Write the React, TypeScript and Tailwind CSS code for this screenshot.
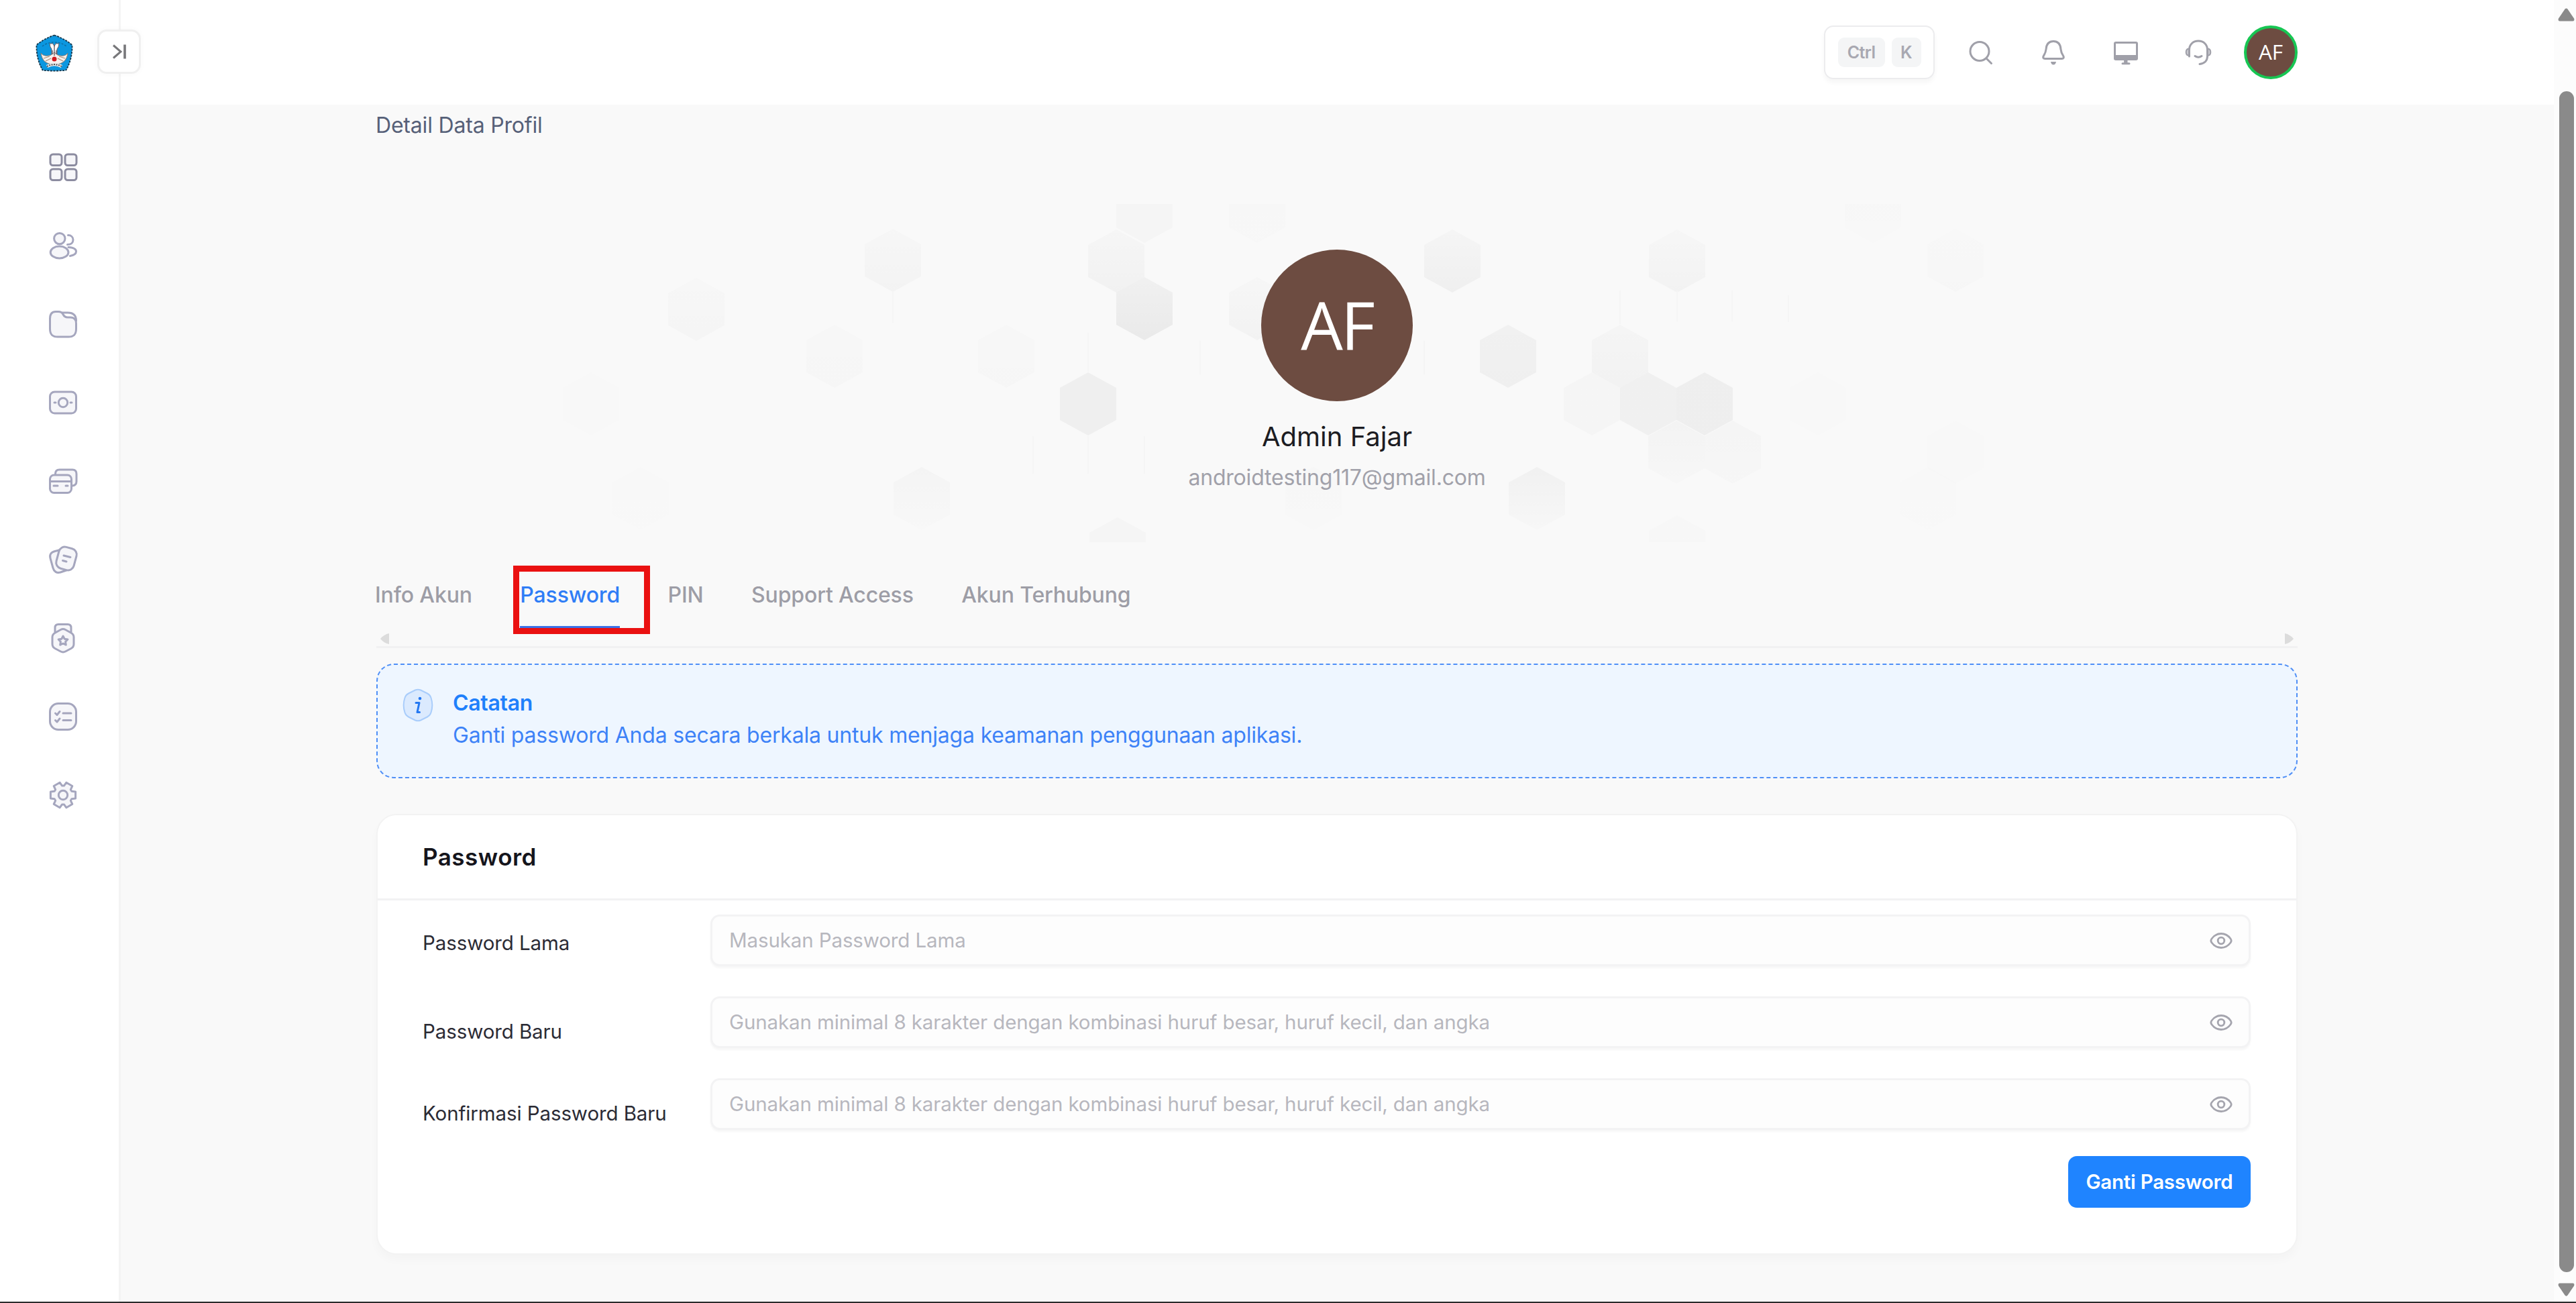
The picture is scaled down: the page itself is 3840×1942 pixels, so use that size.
import type { ReactNode } from 'react';

// Six-tooth gear outline
const gearPath = (() => {
  const pts: string[] = [];
  for (let i = 0; i < 6; i++) {
    const base = (i * Math.PI) / 3;
    [[-0.42, 14], [-0.27, 19.3], [0.27, 19.3], [0.42, 14]].forEach(([a, r]) => {
      pts.push(`${(24 + r * Math.cos(base + a)).toFixed(1)} ${(24 + r * Math.sin(base + a)).toFixed(1)}`);
    });
  }
  return `M${pts.join('L')}Z`;
})();

const menuItems: { label: string; icon: ReactNode; dark?: boolean }[] = [
  {
    label: 'Dashboard',
    dark: true,
    icon: (
      <>
        <rect x="5" y="5" width="17" height="16.5" rx="4" />
        <rect x="27" y="5" width="17" height="16.5" rx="4" />
        <rect x="5" y="27" width="17" height="16.5" rx="4" />
        <rect x="27" y="27" width="17" height="16.5" rx="4" />
      </>
    ),
  },
  {
    label: 'Pengguna',
    icon: (
      <>
        <circle cx="18.8" cy="13.6" r="8.2" />
        <ellipse cx="18.6" cy="34" rx="13.4" ry="9" />
        <path d="M31.5 8.5c4.5 0 7.5 3 7.5 7s-3 7-8.5 7" fill="none" />
        <path d="M32 26.5c7 .5 11.500 2.700 11.500 6.300 0 3.400-3.500 5.700-9 6.700" fill="none" />
      </>
    ),
  },
  {
    label: 'Berkas',
    icon: (
      <>
        <path d="M22 7h9c8 0 12.5 4 12.5 12" fill="none" />
        <path d="M13 5.5h4c4 0 5.5 1 7 4 1.7 3.5 3.5 4.5 7 4.5h4c5.500 0 8.500 3.500 8.500 9v8c0 8.500-3.500 12-11.500 12H16c-8 0-11.500-3.500-11.500-12V16c0-7 3-10.500 8.500-10.500Z" />
      </>
    ),
  },
  {
    label: 'Keuangan',
    icon: (
      <>
        <rect x="4.5" y="8" width="39" height="32" rx="7" />
        <circle cx="24" cy="24" r="6.7" />
        <path d="M11 24h2M35 24h2" />
      </>
    ),
  },
  {
    label: 'Kartu',
    icon: (
      <>
        <path d="M12.5 15v-1.5c0-4 2-6.5 6-6.5H38c4 0 6 2.5 6 6.5v11c0 4-2 6-6 6.5h-1.5" />
        <rect x="4.5" y="15" width="32" height="26.5" rx="6" />
        <path d="M5 24.5h31M10 31h6M28 31h3" />
      </>
    ),
  },
  {
    label: 'Dokumen',
    icon: (
      <>
        <path d="M20 9.5l-8 2c-6 1.5-8.5 5-7 10.5l4 14.5c1.5 5.5 5.5 8 11 6.5l9-3" />
        <rect x="15.5" y="6" width="27" height="33" rx="9" transform="rotate(15 29 22.5)" />
        <path d="M25 18l10 2.5M23.5 25.5l5.5 1.5" />
      </>
    ),
  },
  {
    label: 'Lencana',
    icon: (
      <>
        <path d="M12 15V8.5C12 5 13.5 3.5 17 3.5h14c3.5 0 5 1.5 5 5V15" />
        <path d="M20.5 11.5c2.4-1.3 4.6-1.3 7 0l8.5 4.7c2.7 1.5 4 3.5 4 6.3v10.5c0 3-1.3 5-4 6.5l-8.500 4.500c-2.400 1.300-4.600 1.300-7 0l-8.500-4.500c-2.700-1.500-4-3.500-4-6.500V22.500c0-2.800 1.300-4.800 4-6.300Z" />
        <path d="M24 21l2.2 4.200 4.700.8-3.300 3.400.7 4.700-4.300-2.100-4.300 2.100.7-4.700-3.300-3.400 4.700-.8Z" />
      </>
    ),
  },
  {
    label: 'Tugas',
    icon: (
      <>
        <rect x="4.5" y="4.5" width="39" height="39" rx="12.5" />
        <path d="M12.5 19l2.5 2.5 4-5M24 19h12M12.5 29.5l2.5 2.5 4-5M24 29.5h12" />
      </>
    ),
  },
  {
    label: 'Pengaturan',
    icon: (
      <>
        <path d={gearPath} />
        <circle cx="24" cy="24" r="6.7" />
      </>
    ),
  },
];

const tabs = [
  { label: 'Info Akun', active: false },
  { label: 'Password', active: true },
  { label: 'PIN', active: false },
  { label: 'Support Access', active: false },
  { label: 'Akun Terhubung', active: false },
];

const fields = [
  { label: 'Password Lama', placeholder: 'Masukan Password Lama', offset: 'pt-2' },
  {
    label: 'Password Baru',
    placeholder: 'Gunakan minimal 8 karakter dengan kombinasi huruf besar, huruf kecil, dan angka',
    offset: 'pt-[27px]',
  },
  {
    label: 'Konfirmasi Password Baru',
    placeholder: 'Gunakan minimal 8 karakter dengan kombinasi huruf besar, huruf kecil, dan angka',
    offset: 'pt-7',
  },
];

// [center x, center y, top opacity, bottom opacity]
const hexagons: [number, number, number, number][] = [
  [1706, 315, 0.018, 0.018],
  [1664, 389, 0.013, 0.032],
  [1706, 460, 0.035, 0.062],
  [1622, 602, 0.042, 0.042],
  [1331, 388, 0.01, 0.024],
  [1038, 461, 0.008, 0.018],
  [1244, 531, 0.008, 0.012],
  [1500, 531, 0.008, 0.011],
  [1374, 743, 0.02, 0.005],
  [1666, 818, 0.018, 0.018],
  [1874, 315, 0.01, 0.006],
  [1874, 460, 0.01, 0.028],
  [2165, 389, 0.016, 0.04],
  [2500, 389, 0.01, 0.028],
  [2248, 531, 0.033, 0.04],
  [2415, 531, 0.016, 0.03],
  [2373, 602, 0.016, 0.016],
  [2457, 602, 0.036, 0.036],
  [2541, 602, 0.043, 0.043],
  [2499, 674, 0.025, 0.008],
  [2583, 674, 0.018, 0.01],
  [2291, 743, 0.034, 0.008],
  [1958, 743, 0.01, 0.004],
  [2710, 602, 0.006, 0.006],
  [2500, 815, 0.008, 0.008],
  [2792, 315, 0.008, 0.005],
  [2915, 388, 0.005, 0.011],
  [2915, 674, 0.004, 0.004],
  [2874, 743, 0.005, 0.003],
  [881, 602, 0.004, 0.004],
  [955, 743, 0.005, 0.003],
];

function HexPattern() {
  return (
    <svg className="absolute inset-0 h-full w-full" viewBox="561 304 2864 504" aria-hidden="true">
      {hexagons.map(([x, y, from, to], i) => (
        <g key={i}>
          <linearGradient id={`hex${i}`} x1="0" y1="0" x2="0" y2="1">
            <stop offset="0" stopOpacity={from} />
            <stop offset="1" stopOpacity={to} />
          </linearGradient>
          <path d={`M${x} ${y - 47}l42 23v48l-42 23l-42 -23v-48z`} fill={`url(#hex${i})`} />
        </g>
      ))}
      <path
        d="M1331 435v46M1622 496v58M1622 650v56M1540 650v56M1706 650v56M2415 433v50M2500 433v46M2582 433v46M2666 440v40M2123 508v50M1789 508v50"
        stroke="#f5f5f5"
        strokeWidth="2"
      />
    </svg>
  );
}

function Logo() {
  return (
    <svg className="h-[56px] w-[56px]" viewBox="0 0 56 56">
      <path
        d="M28 1.5C36 4 47 9.5 54.5 16c.5 14-3 27-9 37.5-11 1.500-24 1.500-35 0C4.500 43 1 30 1.500 16 9 9.500 20 4 28 1.500Z"
        fill="#0b97e0"
        stroke="#16384d"
        strokeWidth="1.8"
        strokeDasharray="3 1.5"
      />
      <path d="M10 18c10-8 26-8 36 0" fill="none" stroke="#0d6ea6" strokeWidth="1.5" strokeDasharray="3 2" />
      <path d="M21 14h5l2 4 2-4h5l-1 5-2 3v10h-8V22l-2-3Z" fill="#fff" stroke="#6b5f66" strokeWidth="1" />
      <path
        d="M8 28c4 5 9 5 15 3l5-4 5 4c6 2 11 2 15-3-1 9-6 15-13 16H21C14 43 9 37 8 28Z"
        fill="#f6f1ee"
        stroke="#8a7a6e"
        strokeWidth="1"
      />
      <path d="M12 36l9-3M15 40l8-4M44 36l-9-3M41 40l-8-4" stroke="#b08f76" strokeWidth="1.3" />
      <path d="M28 17v15M25 24v6M31 24v6" stroke="#55454d" strokeWidth="1.2" />
      <circle cx="28" cy="37" r="3.5" fill="#d0191f" />
      <path d="M17 48c7-4 15-4 22 0" fill="none" stroke="#e8e8e8" strokeWidth="4.5" />
      <path d="M17 48c7-4 15-4 22 0" fill="none" stroke="#4d4d4d" strokeWidth="2" strokeDasharray="2 1.5" />
    </svg>
  );
}

function HeaderIcon({ children }: { children: ReactNode }) {
  return (
    <button className="flex w-[108px] items-center justify-center">
      <svg
        className="h-12 w-12"
        viewBox="0 0 48 48"
        fill="none"
        stroke="#a0a0a9"
        strokeWidth="3"
        strokeLinecap="round"
        strokeLinejoin="round"
      >
        {children}
      </svg>
    </button>
  );
}

function Sidebar() {
  return (
    <aside className="relative flex w-[180px] shrink-0 flex-col border-r-[3px] border-[#f4f4f4] bg-white">
      <div className="flex h-[190px] pt-[51px] pl-[53px]">
        <Logo />
      </div>
      {/* Sidebar toggle */}
      <button className="absolute top-[44px] left-[145px] z-10 flex h-[66px] w-[65px] items-center justify-center rounded-[14px] border-[3px] border-[#f0f0f0] bg-white shadow-[0_0_8px_rgba(0,0,0,0.03)]">
        <svg className="h-6 w-6" viewBox="0 0 24 24" fill="none" stroke="#77777a" strokeWidth="3">
          <path d="M3 2.5l11 9.5L3 21.5" />
          <path d="M20 1.5v21" strokeWidth="3.6" />
        </svg>
      </button>
      <nav className="flex flex-col">
        {menuItems.map((item) => (
          <a key={item.label} aria-label={item.label} className="flex h-[117.1px] items-center pl-[70px]">
            <svg
              className="h-12 w-12"
              viewBox="0 0 48 48"
              fill="#f6f6f9"
              stroke={item.dark ? '#8c8ca0' : '#a5a6be'}
              strokeWidth="3"
              strokeLinecap="round"
              strokeLinejoin="round"
            >
              {item.icon}
            </svg>
          </a>
        ))}
      </nav>
    </aside>
  );
}

function Header() {
  return (
    <header className="flex h-[156px] shrink-0 items-center justify-end bg-white pr-[382px]">
      <div className="mr-[15px] flex h-[80px] w-[165px] items-center justify-center gap-[10px] rounded-[14px] border-2 border-[#ececee] shadow-[0_5px_7px_rgba(0,0,0,0.04)]">
        <kbd className="flex h-[44px] w-[70px] items-center justify-center rounded-[9px] bg-[#f4f5f6] pt-px font-['Inter',sans-serif] text-[25px] font-semibold tracking-[-0.6px] text-[#a8a8b1]">
          Ctrl
        </kbd>
        <kbd className="flex h-[44px] w-[44px] items-center justify-center rounded-[9px] bg-[#f4f5f6] pt-px font-['Inter',sans-serif] text-[25px] font-semibold tracking-[-0.6px] text-[#a8a8b1]">
          K
        </kbd>
      </div>
      <HeaderIcon>
        <circle cx="22" cy="22.5" r="14" />
        <path d="M32 33l7.5 7.5" />
      </HeaderIcon>
      <HeaderIcon>
        <path d="M24 7.5c-7 0-10.5 5-11 12-.4 4.5-1.6 6.5-3.5 9.5-1.600 2.700-.6 4.500 2 4.500h25c2.600 0 3.600-1.800 2-4.500-1.900-3-3.100-5-3.500-9.500-.5-7-4-12-11-12Z" />
        <path d="M20 38h8c-.5 3-2 4.5-4 4.5S20.500 41 20 38Z" fill="#a0a0a9" stroke="none" />
      </HeaderIcon>
      <HeaderIcon>
        <rect x="7.5" y="9.5" width="33" height="25" rx="1.5" />
        <path d="M7.5 28.5h33v6h-33zM22 34h4v7h-4z" fill="#a0a0a9" strokeWidth="1" />
        <path d="M19 40.8h10" />
      </HeaderIcon>
      <HeaderIcon>
        <path d="M10.5 30V20.5C10.500 12.500 16 7 24 7s13.500 5.500 13.500 13.500V30c0 6-4 10.500-11.500 11.500" />
        <path
          d="M10 18.5c-3 .3-4.300 2-4.300 5.200s1.300 4.900 4.300 5.200ZM38 18.500c3 .3 4.300 2 4.300 5.200s-1.300 4.900-4.300 5.200Z"
          fill="#c9c9d0"
          strokeWidth="2"
        />
        <path d="M19 29.5c3 2 7 2 10 0" />
      </HeaderIcon>
      <div className="ml-[14px] flex h-[80px] w-[80px] items-center justify-center rounded-full border-[4px] border-[#17c653] bg-[#6d4c41] pb-[3px] font-['Open_Sans',sans-serif] text-[31.5px] text-white">
        AF
      </div>
    </header>
  );
}

function ProfileHero() {
  return (
    <section className="relative mt-[86px] h-[504px] overflow-hidden">
      <HexPattern />
      <div className="relative flex flex-col items-center pt-[68px]">
        <div className="flex h-[226px] w-[226px] items-center justify-center rounded-full bg-[#6d4c41] pb-[5px] font-['Open_Sans',sans-serif] text-[99px] leading-none tracking-[-3px] text-white">
          AF
        </div>
        <h1 className="mt-[21px] h-[64px] text-[40px] leading-[64px] text-[#1c1c22]">Admin Fajar</h1>
        <p className="h-[58px] text-[32px] leading-[58px] tracking-[-0.19px] text-[#a1a1aa]">
          androidtesting117@gmail.com
        </p>
      </div>
    </section>
  );
}

function Tabs() {
  return (
    <div className="border-b-[3px] border-[#f1f1f2]">
      <div className="mt-[32px] -ml-[2px] flex h-[96px] gap-[71.5px]">
        {tabs.map((tab) => (
          <button
            key={tab.label}
            className={`relative flex h-full items-center border-b-[3px] text-[32px] font-medium tracking-[-0.15px] ${
              tab.active ? 'border-[#3b72e8] text-[#2f7df6]' : 'border-transparent text-[#9d9da6]'
            }`}
          >
            <span className="pt-px">{tab.label}</span>
            {/* Highlight frame around the active tab */}
            {tab.active && (
              <span className="absolute top-[3px] left-[-10px] h-[102px] w-[204px] border-[9px] border-[#ea1111]" />
            )}
          </button>
        ))}
      </div>
      <div className="flex h-[27px] items-center justify-between px-[6px] pt-1">
        <svg className="h-4 w-[14px]" viewBox="0 0 14 16" fill="#dcdcdc">
          <path d="M13 0v16C8 15 3 12 0 8c3-4 8-7 13-8Z" />
        </svg>
        <svg className="h-4 w-[14px]" viewBox="0 0 14 16" fill="#dcdcdc">
          <path d="M1 0v16c5-1 10-4 13-8C11 4 6 1 1 0Z" />
        </svg>
      </div>
    </div>
  );
}

function Notice() {
  return (
    <div className="mt-[23px] flex h-[171px] gap-[28px] rounded-[26px] border-2 border-dashed border-[#4f8ff7] bg-[#eef6ff] pt-[33px] pl-[36px]">
      <svg className="mt-[2px] h-[50px] w-[48px]" viewBox="0 0 48 50" strokeLinecap="round" strokeLinejoin="round">
        <path
          d="M20 2.5c3-1.3 5-1.3 8 0l10 5c3 1.500 4.500 3.500 5.500 6.500 2.500 7.500 2.500 14.500 0 22-1 3-2.500 5-5.500 6.500l-10 5c-3 1.300-5 1.300-8 0l-10-5c-3-1.500-4.500-3.500-5.500-6.500-2.500-7.500-2.500-14.500 0-22 1-3 2.500-5 5.500-6.500Z"
          fill="#dbeafe"
          stroke="#a9cdfb"
          strokeWidth="2"
        />
        <path d="M21 21.5h5l-3 14h3.5" fill="none" stroke="#2478f2" strokeWidth="3" />
        <circle cx="27" cy="15" r="2.3" fill="#2478f2" />
      </svg>
      <div className="text-[32px] leading-[48px]">
        <h3 className="font-semibold tracking-[-0.3px] text-[#1f80fb]">Catatan</h3>
        <p className="tracking-[-0.19px] text-[#3d82f7]">
          Ganti password Anda secara berkala untuk menjaga keamanan penggunaan aplikasi.
        </p>
      </div>
    </div>
  );
}

function PasswordCard() {
  return (
    <section className="mt-[53px] h-[657px] rounded-[30px] border-2 border-[#f3f3f3] bg-white shadow-[0_8px_14px_rgba(0,0,0,0.025)]">
      <div className="flex h-[127px] items-center border-b-[3px] border-[#f2f2f3] px-[67px]">
        <h2 className="text-[35px] font-semibold tracking-[0.5px] text-[#15151c]">Password</h2>
      </div>
      <div className="flex flex-col gap-[45px] pt-[21px] pr-[68px] pl-[67px]">
        {fields.map((field) => (
          <div key={field.label} className="flex h-[77px]">
            <label
              className={`flex w-[429px] items-center text-[29.5px] tracking-[-0.1px] text-[#2b2b35] ${field.offset}`}
            >
              {field.label}
            </label>
            <div className="flex flex-1 items-center justify-between rounded-[14px] border-[3px] border-[#f3f3f4] bg-[#fdfdfd] pr-[23px] pl-[25px] text-[29.5px] tracking-[-0.12px] text-[#b7b7be] shadow-[0_3px_3px_rgba(0,0,0,0.035)]">
              <span>{field.placeholder}</span>
              <svg className="h-[34px] w-[36px]" viewBox="0 0 36 34" fill="none" stroke="#a5a5ae" strokeWidth="2.8">
                <path d="M18 6.5c6 0 10.5 2.7 14 7.5 1.500 2 1.500 4 0 6-3.500 4.800-8 7.500-14 7.500S7.500 24.800 4 20c-1.500-2-1.500-4 0-6 3.500-4.800 8-7.500 14-7.500Z" />
                <circle cx="18" cy="17" r="4.8" />
              </svg>
            </div>
          </div>
        ))}
      </div>
      <div className="mt-[39px] flex justify-end pr-[68px]">
        <button className="flex h-[77px] w-[272px] items-center justify-center rounded-[13px] bg-[#1f84ff] text-[29.5px] font-semibold tracking-[-0.25px] text-white">
          Ganti Password
        </button>
      </div>
    </section>
  );
}

function Scrollbar() {
  return (
    <div className="flex w-[33px] shrink-0 flex-col items-center bg-[#fcfcfc] pt-3 pb-2 pl-1">
      <svg className="h-5 w-[25px]" viewBox="0 0 25 20" fill="#8a8a8a">
        <path d="M10.5 1.5c1.200-1.500 2.800-1.500 4 0l9.500 14c1 1.800.3 4-2 4H3c-2.300 0-3-2.200-2-4Z" />
      </svg>
      <div className="mt-[104px] h-[1760px] w-[22px] rounded-full bg-[#8a8a8a]" />
      <svg className="mt-[16px] h-5 w-[25px]" viewBox="0 0 25 20" fill="#8a8a8a">
        <path d="M10.5 18.5c1.200 1.500 2.800 1.500 4 0l9.500-14c1-1.800.3-4-2-4H3c-2.300 0-3 2.200-2 4Z" />
      </svg>
    </div>
  );
}

export default function App() {
  return (
    <div className="flex h-[1942px] w-[3840px] overflow-hidden border-b-2 border-[#2b2b2b] bg-[#f9f9f9] font-['Inter',sans-serif]">
      <Sidebar />
      <div className="flex flex-1 flex-col">
        <Header />
        <main className="flex-1 pr-[382px] pl-[381px]">
          <div className="-ml-px flex h-[62px] items-center text-[32px] tracking-[-0.19px] text-[#566078]">
            Detail Data Profil
          </div>
          <ProfileHero />
          <Tabs />
          <Notice />
          <PasswordCard />
        </main>
      </div>
      <Scrollbar />
    </div>
  );
}
